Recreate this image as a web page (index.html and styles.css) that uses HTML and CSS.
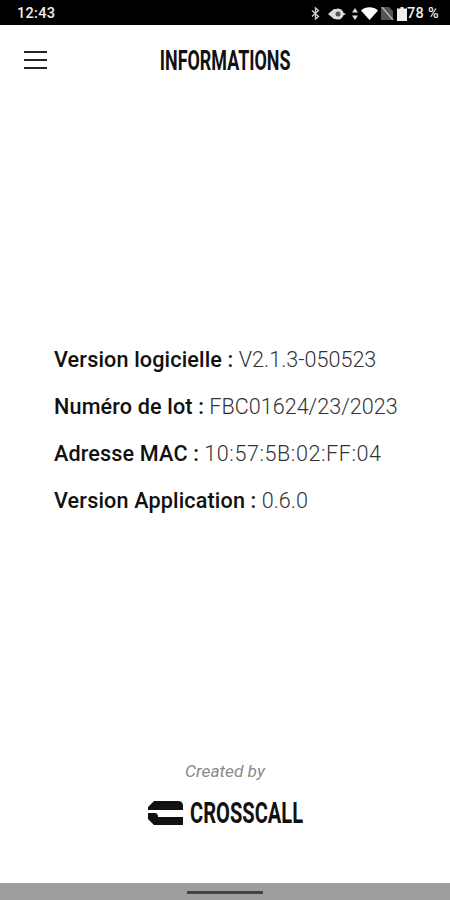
FILE: index.html
```html
<!DOCTYPE html>
<html lang="fr">

<head>
    <meta charset="UTF-8">
    <meta name="viewport" content="width=device-width, initial-scale=1.0">
    <title>Informations</title>
    <link rel="stylesheet" href="styles.css">
</head>

<body>

    <div class="statusBar">
        <span class="statusTime">12:43</span>
        <div class="statusIcons">
            <!-- bluetooth -->
            <svg width="9" height="13" viewBox="0 0 9 13"><path d="M1 3.5l6.5 6-3 2.5V1l3 2.5-6.5 6" fill="none" stroke="#ccc" stroke-width="1.4"/></svg>
            <!-- vibrate / eye -->
            <svg class="eyeIcon" width="19" height="12" viewBox="0 0 19 12"><path d="M0 6l6-5h2.500v10H6z" fill="#ddd"/><circle cx="10" cy="6" r="5.500" fill="#ddd"/><circle cx="10" cy="6" r="2.500" fill="#555"/><path d="M15 4.500l3 1.500-3 1.500z" fill="#ddd"/></svg>
            <!-- data arrows -->
            <svg width="6" height="12" viewBox="0 0 6 12"><path d="M3 0l3 4.500H0zM3 12L0 7.500h6z" fill="#ddd"/></svg>
            <!-- wifi -->
            <svg width="17" height="13" viewBox="0 0 17 13"><path d="M0 3.500C4.500-.7 12.500-.7 17 3.500L8.500 13z" fill="#fff"/></svg>
            <!-- no signal -->
            <svg width="13" height="13" viewBox="0 0 13 13"><path d="M0 0h8l4 4v9H0z" fill="#555"/><path d="M1 0l11 13" stroke="#bbb" stroke-width="1.300"/></svg>
            <!-- battery -->
            <svg width="10" height="14" viewBox="0 0 10 14"><path d="M3.500 0h3v1.500H10V14H0V1.500h3.500z" fill="#eee"/></svg>
        </div>
        <span class="statusBattery">78 %</span>
    </div>

    <div class="header">
        <div class="menuIcon">
            <span></span>
            <span></span>
            <span></span>
        </div>
        <h1 class="title">INFORMATIONS</h1>
    </div>

    <div class="infoBox">
        <p class="infoRow"><b>Version logicielle :</b> V2.1.3-050523</p>
        <p class="infoRow"><b>Numéro de lot :</b> FBC01624/23/2023</p>
        <p class="infoRow"><b>Adresse MAC :</b> <span class="macValue">10:57:5B:02:FF:04</span></p>
        <p class="infoRow"><b>Version Application :</b> 0.6.0</p>
    </div>

    <div class="footer">
        <p class="createdBy">Created by</p>
        <div class="brand">
            <svg width="35" height="24" viewBox="0 0 35 24"><path d="M6 0h24q5 0 5 5v4H0V6zM0 12h7q3 0 3 4h25v8H6l-6-6z" fill="#111"/></svg>
            <span class="brandName">CROSSCALL</span>
        </div>
    </div>

    <div class="navBar">
        <div class="navHandle"></div>
    </div>

</body>

</html>
```
FILE: styles.css
```css
body {
    margin: 0;
    height: 900px;
    display: flex;
    flex-direction: column;
    background-color: #fff;
    color: #111;
    font-family: Roboto, Arial, sans-serif;
    overflow: hidden;
}

.statusBar {
    height: 25px;
    flex-shrink: 0;
    box-sizing: border-box;
    display: flex;
    align-items: center;
    padding: 2px 11px 0 17px;
    background-color: #000;
    color: #eee;
    font-size: 14.5px;
    font-weight: 500;
    letter-spacing: 0.3px;
}

.statusTime {
    flex: 1;
}

.statusIcons {
    display: flex;
    align-items: center;
    gap: 3px;
}

.eyeIcon {
    margin: 0 2px 0 5px;
}

.header {
    height: 70px;
    flex-shrink: 0;
    display: grid;
    grid-template-columns: 1fr auto 1fr;
    align-items: center;
    padding-left: 24px;
    padding-right: 24px;
}

.menuIcon {
    width: 23px;
    display: flex;
    flex-direction: column;
    gap: 6px;
}

.menuIcon span {
    height: 2px;
    background-color: #222;
}

.title {
    margin: 2px 0 0;
    font-size: 28px;
    font-weight: 700;
    line-height: 1;
    color: #111;
    transform: scaleX(0.64);
}

.infoBox {
    flex: 1;
    display: flex;
    flex-direction: column;
    justify-content: center;
    gap: 21.7px;
    padding: 2px 54px 0;
}

.infoRow {
    margin: 0;
    font-size: 21.6px;
    line-height: 25px;
    font-weight: 300;
    color: #333;
    white-space: nowrap;
}

.infoRow b {
    font-weight: 500;
    letter-spacing: 0.15px;
    color: #111;
}

.macValue {
    letter-spacing: 0.55px;
}

.footer {
    height: 120px;
    flex-shrink: 0;
    display: flex;
    flex-direction: column;
    align-items: center;
}

.createdBy {
    margin: 0 0 22px;
    font-size: 17.3px;
    line-height: 16px;
    font-style: italic;
    color: #8a8a8a;
}

.brand {
    display: flex;
    align-items: center;
    gap: 7px;
    margin-left: 1px;
}

.brandName {
    width: 113px;
    font-size: 30px;
    line-height: 24px;
    font-weight: 700;
    white-space: nowrap;
    color: #111;
    transform: scaleX(0.67);
    transform-origin: left center;
}

.navBar {
    height: 17px;
    flex-shrink: 0;
    background-color: #9e9e9e;
    display: flex;
    justify-content: center;
    padding-top: 8px;
    box-sizing: border-box;
}

.navHandle {
    width: 76px;
    height: 3px;
    background-color: #444;
}
```
